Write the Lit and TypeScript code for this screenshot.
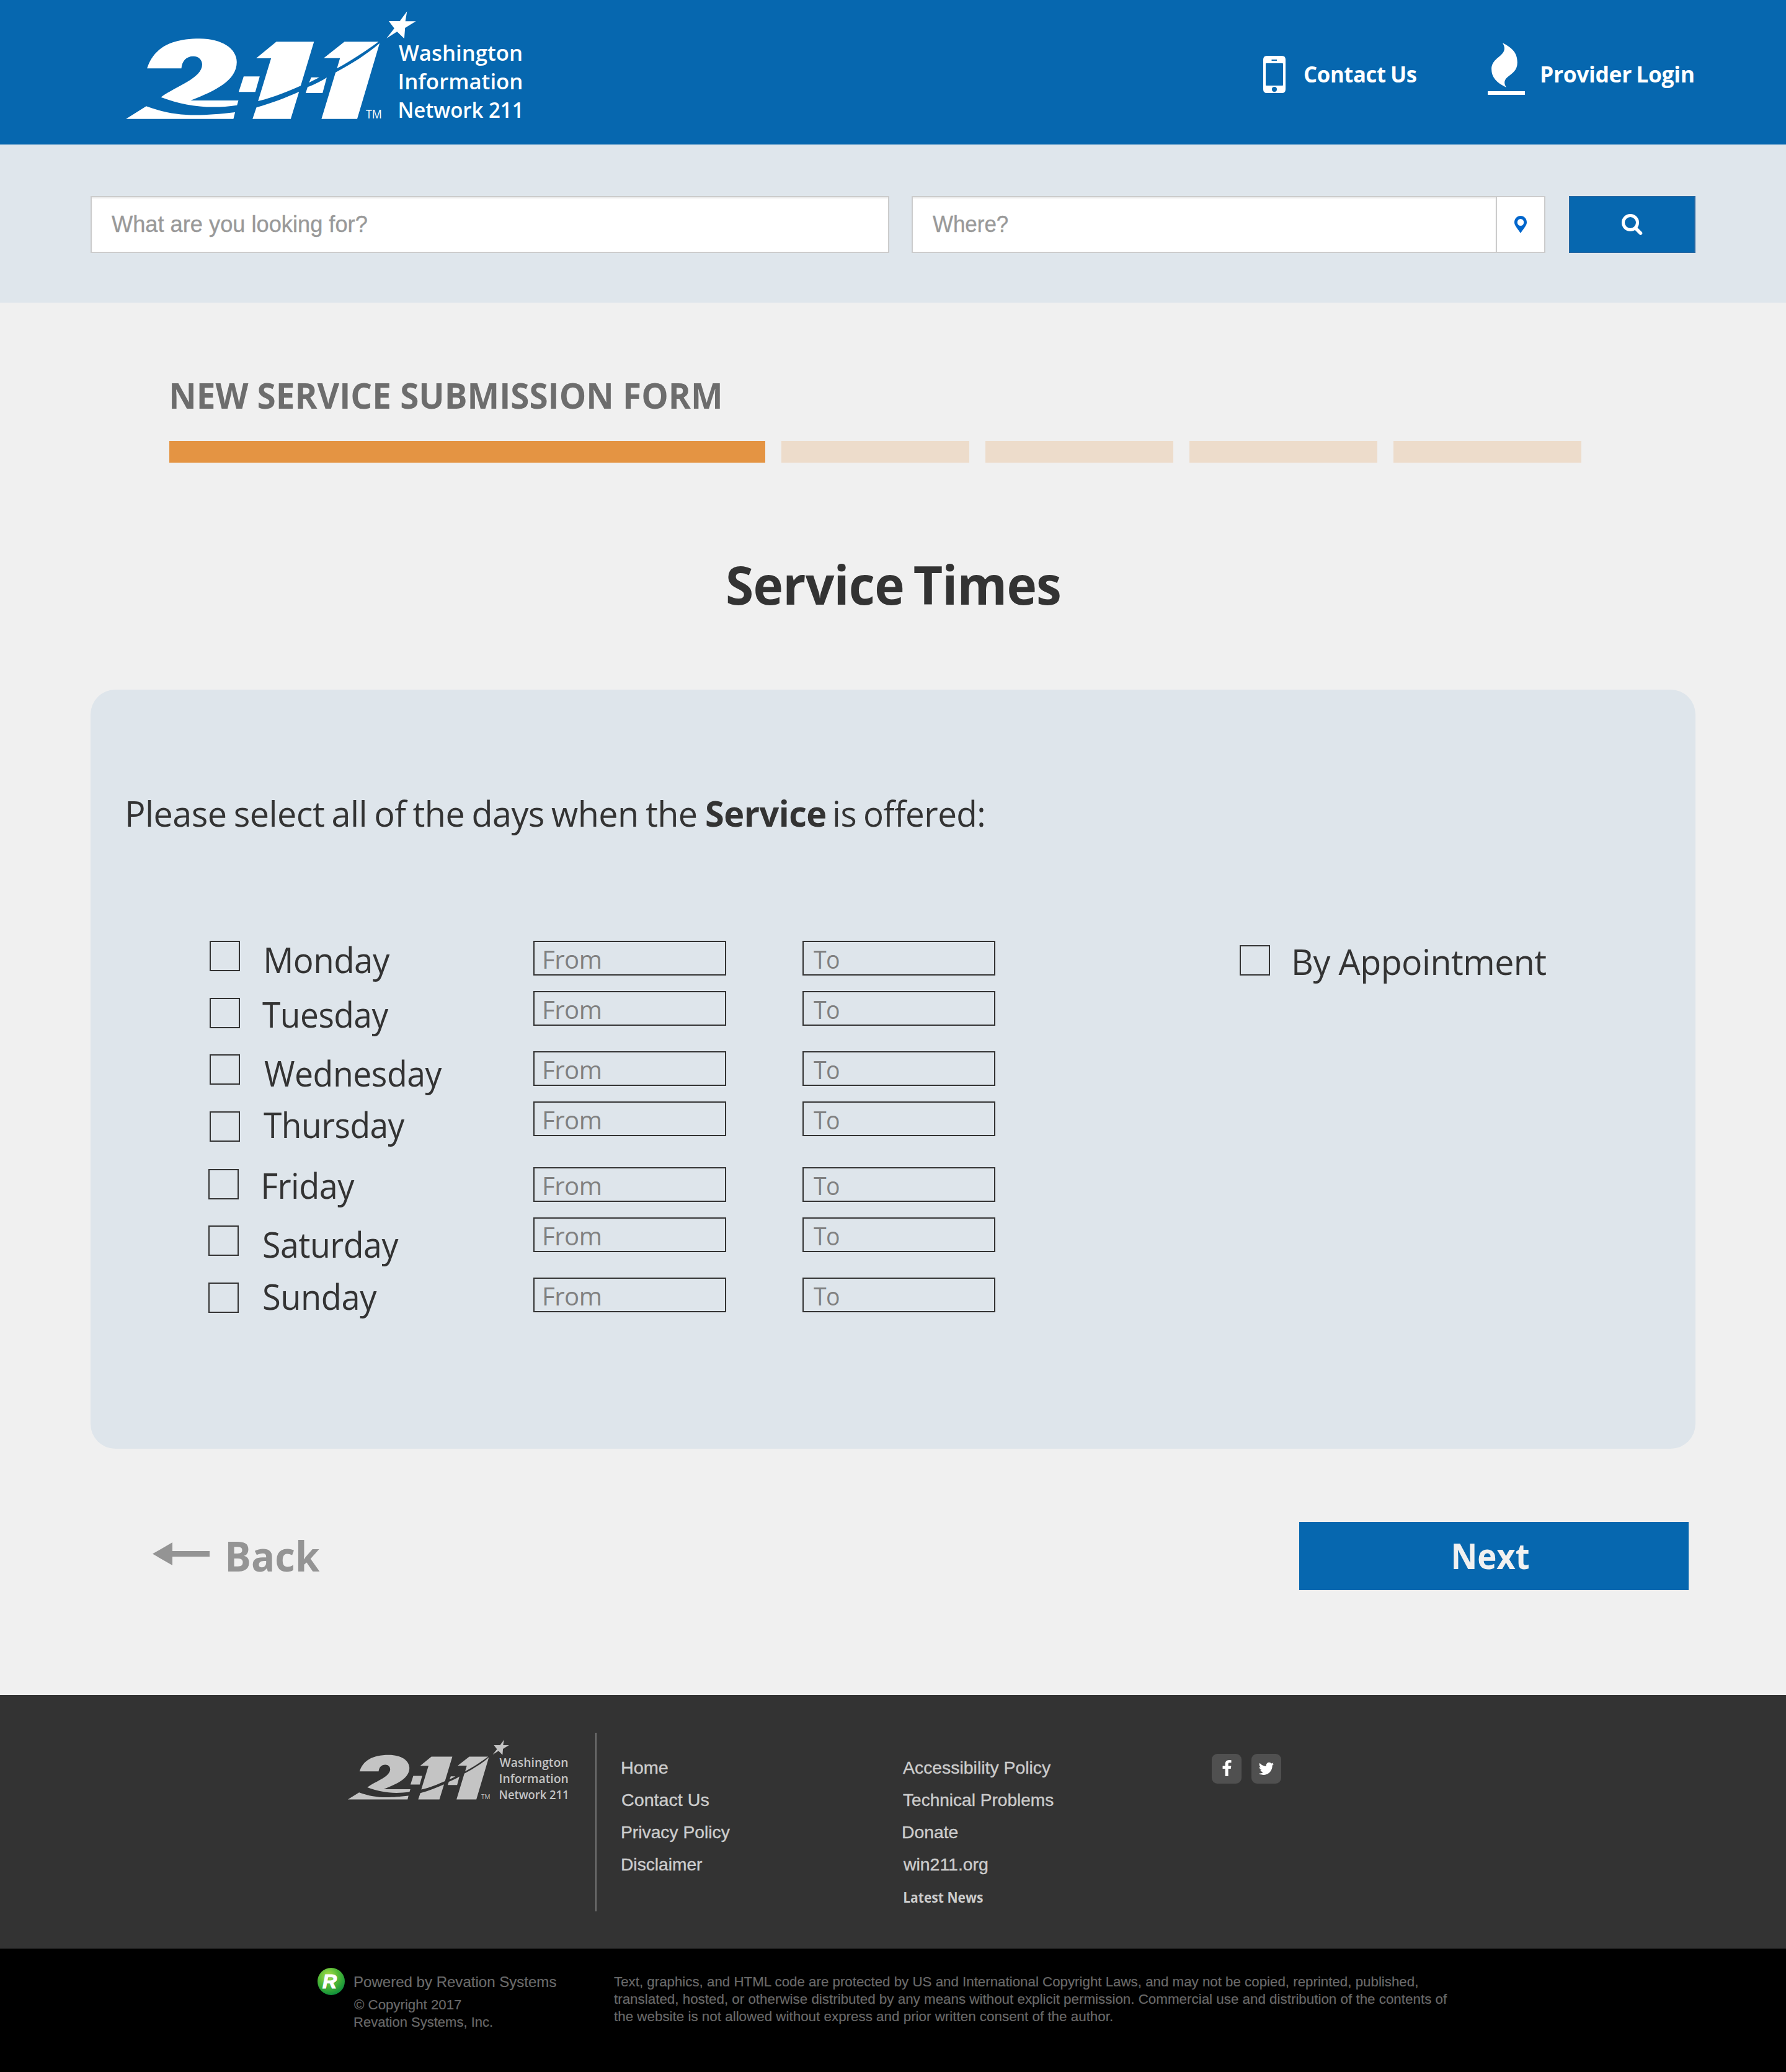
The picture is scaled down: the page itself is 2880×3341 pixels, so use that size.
import { LitElement, html, css } from "lit";
import { customElement, property } from "lit/decorators.js";

/** Single line of text condensed or expanded so that its ink spans `w` pixels. */
@customElement("fit-text")
class FitText extends LitElement {
  @property({ type: Number }) w = 100;
  @property() text = "";

  static styles = css`
    :host { display: block; flex: none; white-space: pre; }
    .ink { display: inline-block; transform-origin: 0 50%; vertical-align: top; }
  `;

  render() {
    return html`<span class="ink">${this.text}</span>`;
  }

  updated() {
    const ink = this.renderRoot.querySelector(".ink") as HTMLElement;
    const cs = getComputedStyle(ink);
    const ctx = document.createElement("canvas").getContext("2d") as any;
    ctx.font = `${cs.fontStyle} ${cs.fontWeight} ${cs.fontSize} ${cs.fontFamily}`;
    ctx.letterSpacing = cs.letterSpacing === "normal" ? "0px" : cs.letterSpacing;
    ctx.wordSpacing = cs.wordSpacing === "normal" ? "0px" : cs.wordSpacing;
    const m = ctx.measureText(this.text);
    const left = -m.actualBoundingBoxLeft;
    const scale = this.w / (m.actualBoundingBoxRight - left);
    this.style.width = `${this.w}px`;
    ink.style.transform = `translateX(${-left * scale}px) scaleX(${scale})`;
  }
}

@customElement("win-logo")
class WinLogo extends LitElement {
  static styles = css`
    :host { display: block; flex: none; }
    .logo { display: block; width: 100%; height: 100%; overflow: visible; fill: currentColor; }
    .name { font: 600 35px "Open Sans", sans-serif; }
    .tm { font: 400 19.5px "Open Sans", sans-serif; }
  `;

  render() {
    return html`<svg class="logo" viewBox="0 0 700 233">
      <g transform="scale(0.446429 0.333333)">
        <path d="M128 331C150 238 208 187 318 187C400 187 452 237 452 300C452 388 378 438 285 486H458L453 509C350 530 262 512 178 470C235 415 327 378 327 312C327 290 315 272 295 272C270 272 254 295 252 331Z" />
        <path d="M52 575L125 514C225 562 300 566 446 543L440 575Z" />
        <path d="M477 370H535L519 445H459Z" />
        <path d="M595 202H731L683 415C640 440 590 470 529 489L576 282H522Z" />
        <path d="M523 520C580 498 630 472 677 444L647 575H509Z" />
        <path d="M721 374H750C740 382 725 392 713 400Z" />
        <path d="M777 375L762 450H701L708 421C735 407 755 394 777 375Z" />
        <path d="M841 202H964C915 250 870 290 814 331L825 281H766Z" />
        <path d="M968 209L887 575H758L809 350C870 305 920 265 968 209Z" />
        <path d="M1067 55L1061 103H1099L1060 135L1057 187L1031 153L993 185L1021 137L1001 102H1041Z" />
      </g>
      <text class="tm" x="410" y="191" textLength="26" lengthAdjust="spacingAndGlyphs">TM</text>
      <text class="name" x="463" y="98" textLength="200" lengthAdjust="spacingAndGlyphs">Washington</text>
      <text class="name" x="461.500" y="144" textLength="202" lengthAdjust="spacingAndGlyphs">Information</text>
      <text class="name" x="461.500" y="190" textLength="203" lengthAdjust="spacingAndGlyphs">Network 211</text>
    </svg>`;
  }
}

interface Day { name: string; w: number; x: number; box: number; boxX: number; label: number; field: number; }

const DAYS: Day[] = [
  { name: "Monday", w: 200, x: 6.5, box: 0, boxX: 0, label: 3, field: 0 },
  { name: "Tuesday", w: 203.8, x: 1, box: 92, boxX: 0, label: 90.5, field: 81 },
  { name: "Wednesday", w: 287, x: 4.3, box: 183, boxX: 0, label: 186, field: 178 },
  { name: "Thursday", w: 228, x: 2.6, box: 275, boxX: 0, label: 269, field: 259 },
  { name: "Friday", w: 147, x: 2.6, box: 368, boxX: -2, label: 367, field: 365 },
  { name: "Saturday", w: 218, x: 3, box: 459, boxX: -2, label: 462, field: 446 },
  { name: "Sunday", w: 183, x: 2.6, box: 551, boxX: -2, label: 545.5, field: 543 },
];

const LINKS_A: [string, number][] = [["Home", 74], ["Contact Us", 140.5], ["Privacy Policy", 174.5], ["Disclaimer", 130]];
const LINKS_B: [string, number][] = [["Accessibility Policy", 239], ["Technical Problems", 243], ["Donate", 88.5], ["win211.org", 137]];

/** Space above item i in a column whose items sit at the given tops. */
const gapAbove = (key: "box" | "label" | "field", i: number, h: number) =>
  DAYS[i][key] - (i ? DAYS[i - 1][key] + h : 0);

@customElement("app-root")
class AppRoot extends LitElement {
  static styles = css`
    :host { display: block; width: 2880px; font-family: "Open Sans", "Noto Sans", sans-serif; color: #333; }
    .header { height: 233px; background: #0667af; color: #fff; display: flex; align-items: flex-start; padding-left: 180px; box-sizing: border-box; }
    .brand { width: 700px; height: 233px; }
    .nav { display: flex; align-items: flex-start; margin-left: 1157px; font-weight: 700; font-size: 36.5px; line-height: 36px; letter-spacing: -0.01em; word-spacing: -0.04em; }
    .navtext { margin-top: 101px; }
    .phone { width: 36px; height: 60px; margin: 90px 31px 0 0; }
    .flame { width: 60px; height: 84px; margin: 69px 27px 0 115px; }
    svg { display: block; flex: none; }

    .search { height: 255px; background: #dfe6ec; display: flex; align-items: flex-start; padding: 83px 0 0 146px; box-sizing: border-box; font-family: "Liberation Sans", Arial, sans-serif; font-size: 36.5px; color: #999; -webkit-text-stroke: 0.4px; }
    .input { height: 92px; box-sizing: border-box; border: 2px solid #ccc; background: #fff; box-shadow: inset 0 2px 2px rgba(0, 0, 0, 0.075); line-height: 88px; padding-left: 32px; }
    .what { width: 1288px; }
    .where { width: 944px; margin-left: 36px; }
    .locate { width: 80px; height: 92px; box-sizing: border-box; margin-left: -2px; border: 2px solid #ccc; background: #fff; display: flex; justify-content: center; align-items: center; }
    .go { width: 204px; height: 92px; margin-left: 38px; box-sizing: border-box; border: 2px solid #2468a4; background: #0667af; display: flex; align-items: center; justify-content: center; }

    .page { height: 2245px; background: #f0f0f0; display: flex; flex-direction: column; align-items: flex-start; }
    .form-name { margin: 121px 0 0 277px; font-weight: 700; font-size: 57px; line-height: 57px; color: #6d6d6d; }
    .progress { margin: 45px 0 0 273px; display: flex; gap: 26px; height: 35px; }
    .step { width: 303px; background: #eddccb; }
    .step.done { width: 961px; background: #e49443; }
    .title { margin: 153px 0 0 1173px; font-weight: 700; font-size: 85.5px; line-height: 86px; letter-spacing: -0.01em; word-spacing: -0.07em; }
    .panel { margin: 127px 0 0 146px; width: 2588px; height: 1224px; border-radius: 40px; background: #dee5eb; padding-top: 172px; box-sizing: border-box; }
    .ask { display: flex; margin-left: 60px; font-size: 56.5px; line-height: 56px; letter-spacing: -0.01em; word-spacing: -0.05em; }
    .svc { font-weight: 700; margin: 0 15px 0 16px; }
    .schedule { display: flex; align-items: flex-start; margin: 177px 0 0 192px; font-size: 56.5px; line-height: 56px; letter-spacing: -0.01em; }
    .col { display: flex; flex-direction: column; flex: none; }
    .checks { width: 49px; }
    .labels { width: 300px; margin-left: 35px; }
    .from { width: 311px; margin-left: 138px; }
    .to { width: 311px; margin-left: 123px; }
    .check { width: 49px; height: 49px; box-sizing: border-box; border: 2px solid #333; flex: none; }
    .field { height: 56px; box-sizing: border-box; border: 2px solid #333; padding: 7px 0 0 16px; font-size: 41px; line-height: 41px; color: #808080; flex: none; }
    .appt { display: flex; align-items: flex-start; margin-left: 394px; }
    .appt .check { margin-top: 7px; }
    .appt fit-text { margin: 6px 0 0 39px; }
    .actions { display: flex; align-items: flex-start; margin: 118px 0 0 246px; }
    .back { display: flex; color: #949494; font-weight: 700; font-size: 66.5px; line-height: 67px; }
    .back svg { margin: 33px 29px 0 0; }
    .back fit-text { margin-top: 21px; }
    .next { margin-left: 1579px; width: 628px; height: 110px; box-sizing: border-box; background: #0667af; color: #f0f0f0; font-weight: 700; font-size: 57px; line-height: 57px; padding: 26px 0 0 249px; }

    .footer { height: 409px; background: #333; color: #ccc; display: flex; align-items: flex-start; font-family: "Liberation Sans", Arial, sans-serif; font-size: 28.5px; line-height: 52px; -webkit-text-stroke: 0.4px; }
    .footbrand { width: 389.2px; height: 129.5px; margin: 62px 0 0 548.4px; color: #c4c4c4; -webkit-text-stroke: 0; }
    .rule { width: 2px; height: 288px; margin: 61px 0 0 22.4px; background: #737373; }
    .linksa { width: 453px; margin: 91px 0 0 41px; }
    .linksb { width: 498px; margin-top: 91px; }
    .news { font: 700 23px/52px "Open Sans", sans-serif; margin: 1px 0 0 2px; -webkit-text-stroke: 0; }
    .social { display: flex; gap: 16px; margin-top: 95px; }
    .chip { width: 48px; height: 48px; border-radius: 9px; background: #505050; }

    .legal { height: 199px; background: #000; color: #6a6a6a; display: flex; align-items: flex-start; font-family: "Liberation Sans", Arial, sans-serif; font-size: 22.3px; line-height: 28px; -webkit-text-stroke: 0.2px; }
    .rev { margin: 31px 15px 0 512px; }
    .r { font: italic 700 32px "Liberation Sans", Arial, sans-serif; }
    .owner { width: 419px; margin-top: 41.5px; }
    .powered { font-size: 23.8px; line-height: 24px; margin-bottom: 11px; }
    .terms { margin-top: 40px; }
  `;

  private fields(kind: "from" | "to", text: string, w: number) {
    return html`<div class="col ${kind}">
      ${DAYS.map((_, i) => html`<div class="field" style="margin-top:${gapAbove("field", i, 56)}px"><fit-text .text=${text} .w=${w}></fit-text></div>`)}
    </div>`;
  }

  render() {
    return html`
      <header class="header">
        <win-logo class="brand"></win-logo>
        <nav class="nav">
          <svg class="phone" viewBox="0 0 36 60"><path fill="#fff" fill-rule="evenodd" d="M6 0H30Q36 0 36 6V54Q36 60 30 60H6Q0 60 0 54V6Q0 0 6 0ZM5 12Q4 12 4 13V47Q4 48 5 48H31Q32 48 32 47V13Q32 12 31 12ZM13.500 6V8H22V6ZM18 50A4 4 0 1 0 18 58A4 4 0 1 0 18 50Z" /></svg>
          <fit-text class="navtext" .text=${"Contact Us"} .w=${180}></fit-text>
          <svg class="flame" viewBox="821 87 118 252" preserveAspectRatio="none"><path fill="#fff" d="M868 87C895 110 915 130 915 182C915 220 899 234 884 253C871 270 873 286 880 303C850 281 833 256 833 214C833 174 856 160 868 138C877 121 875 105 868 87ZM821 321H939V339H821Z" /></svg>
          <fit-text class="navtext" .text=${"Provider Login"} .w=${245}></fit-text>
        </nav>
      </header>

      <section class="search">
        <div class="input what"><fit-text .text=${"What are you looking for?"} .w=${411.5}></fit-text></div>
        <div class="input where"><fit-text .text=${"Where?"} .w=${121}></fit-text></div>
        <div class="locate">
          <svg width="20" height="28" viewBox="0 0 20 28"><path fill="#06c" fill-rule="evenodd" d="M10 0C4.500 0 0 4.500 0 10.500C0 16 5 20 10 28C15 20 20 16 20 10.500C20 4.500 15.500 0 10 0ZM10 5A5.200 5.500 0 1 1 10 16A5.200 5.500 0 1 1 10 5Z" /></svg>
        </div>
        <div class="go">
          <svg width="34" height="34" viewBox="0 0 34 34" fill="none" stroke="#fff"><circle cx="14" cy="14" r="11.500" stroke-width="5" /><path d="M22.500 23L30.500 31" stroke-width="5.500" stroke-linecap="round" /></svg>
        </div>
      </section>

      <main class="page">
        <fit-text class="form-name" .text=${"NEW SERVICE SUBMISSION FORM"} .w=${884}></fit-text>
        <div class="progress">
          <div class="step done"></div><div class="step"></div><div class="step"></div><div class="step"></div><div class="step"></div>
        </div>
        <fit-text class="title" .text=${"Service Times"} .w=${536.5}></fit-text>

        <section class="panel">
          <div class="ask">
            <fit-text .text=${"Please select all of the days when the"} .w=${916.5}></fit-text>
            <fit-text class="svc" .text=${"Service"} .w=${192}></fit-text>
            <fit-text .text=${"is offered:"} .w=${240}></fit-text>
          </div>
          <div class="schedule">
            <div class="col checks">
              ${DAYS.map((d, i) => html`<div class="check" style="margin:${gapAbove("box", i, 49)}px 0 0 ${d.boxX}px"></div>`)}
            </div>
            <div class="col labels">
              ${DAYS.map((d, i) => html`<fit-text .text=${d.name} .w=${d.w} style="margin:${gapAbove("label", i, 56)}px 0 0 ${d.x}px"></fit-text>`)}
            </div>
            ${this.fields("from", "From", 90)}
            ${this.fields("to", "To", 41)}
            <div class="appt">
              <div class="check"></div>
              <fit-text .text=${"By Appointment"} .w=${406}></fit-text>
            </div>
          </div>
        </section>

        <div class="actions">
          <div class="back">
            <svg width="92" height="37" viewBox="0 0 92 37"><path fill="#949494" d="M0 18.500L32 0V14H92V23H32V37Z" /></svg>
            <fit-text .text=${"Back"} .w=${149}></fit-text>
          </div>
          <div class="next"><fit-text .text=${"Next"} .w=${121}></fit-text></div>
        </div>
      </main>

      <footer class="footer">
        <win-logo class="footbrand"></win-logo>
        <div class="rule"></div>
        <div class="linksa">${LINKS_A.map(([t, w]) => html`<fit-text .text=${t} .w=${w}></fit-text>`)}</div>
        <div class="linksb">
          ${LINKS_B.map(([t, w]) => html`<fit-text .text=${t} .w=${w}></fit-text>`)}
          <fit-text class="news" .text=${"Latest News"} .w=${127}></fit-text>
        </div>
        <div class="social">
          <svg class="chip" viewBox="0 0 48 48" fill="#fff"><path transform="translate(16 10) scale(0.0162 0.0156)" d="M959 12v264h-157q-86 0-116 36t-30 108v189h293l-39 296h-254v759h-306v-759h-255v-296h255v-218q0-186 104-288.500t277-102.500q147 0 228 12z" /></svg>
          <svg class="chip" viewBox="0 0 48 48" fill="#fff"><path transform="translate(11 9.800) scale(0.0155 0.0157)" d="M1620 408q-67 98-162 167 1 14 1 42 0 130-38 259.500t-115.500 248.500-184.500 210.500-258 146-323 54.500q-271 0-496-145 35 4 78 4 225 0 401-138-105-2-188-64.500t-114-159.500q33 5 61 5 43 0 85-11-112-23-185.500-111.500t-73.500-205.500v-4q68 38 146 41-66-44-105-115t-39-154q0-88 44-163 121 149 294.500 238.500t371.500 99.500q-8-38-8-74 0-134 94.500-228.500t228.500-94.500q140 0 236 102 109-21 205-78-37 115-142 178 93-10 186-50z" /></svg>
        </div>
      </footer>

      <section class="legal">
        <svg class="rev" width="44" height="44" viewBox="0 0 44 44">
          <defs><radialGradient id="g" cx="0.4" cy="0.3" r="0.75"><stop offset="0" stop-color="#b2e04a" /><stop offset="0.5" stop-color="#4fb836" /><stop offset="1" stop-color="#078a3c" /></radialGradient></defs>
          <circle cx="22" cy="22" r="22" fill="url(#g)" />
          <text class="r" x="9" y="34" fill="#0a6a2c" opacity="0.6">R</text>
          <text class="r" x="8" y="33" fill="#fff" stroke="#fff" stroke-width="1.200">R</text>
        </svg>
        <div class="owner">
          <fit-text class="powered" .text=${"Powered by Revation Systems"} .w=${326.5}></fit-text>
          <fit-text .text=${"© Copyright 2017"} .w=${173}></fit-text>
          <fit-text .text=${"Revation Systems, Inc."} .w=${223}></fit-text>
        </div>
        <div class="terms">
          <fit-text .text=${"Text, graphics, and HTML code are protected by US and International Copyright Laws, and may not be copied, reprinted, published,"} .w=${1297}></fit-text>
          <fit-text .text=${"translated, hosted, or otherwise distributed by any means without explicit permission. Commercial use and distribution of the contents of"} .w=${1344}></fit-text>
          <fit-text .text=${"the website is not allowed without express and prior written consent of the author."} .w=${804}></fit-text>
        </div>
      </section>
    `;
  }
}
